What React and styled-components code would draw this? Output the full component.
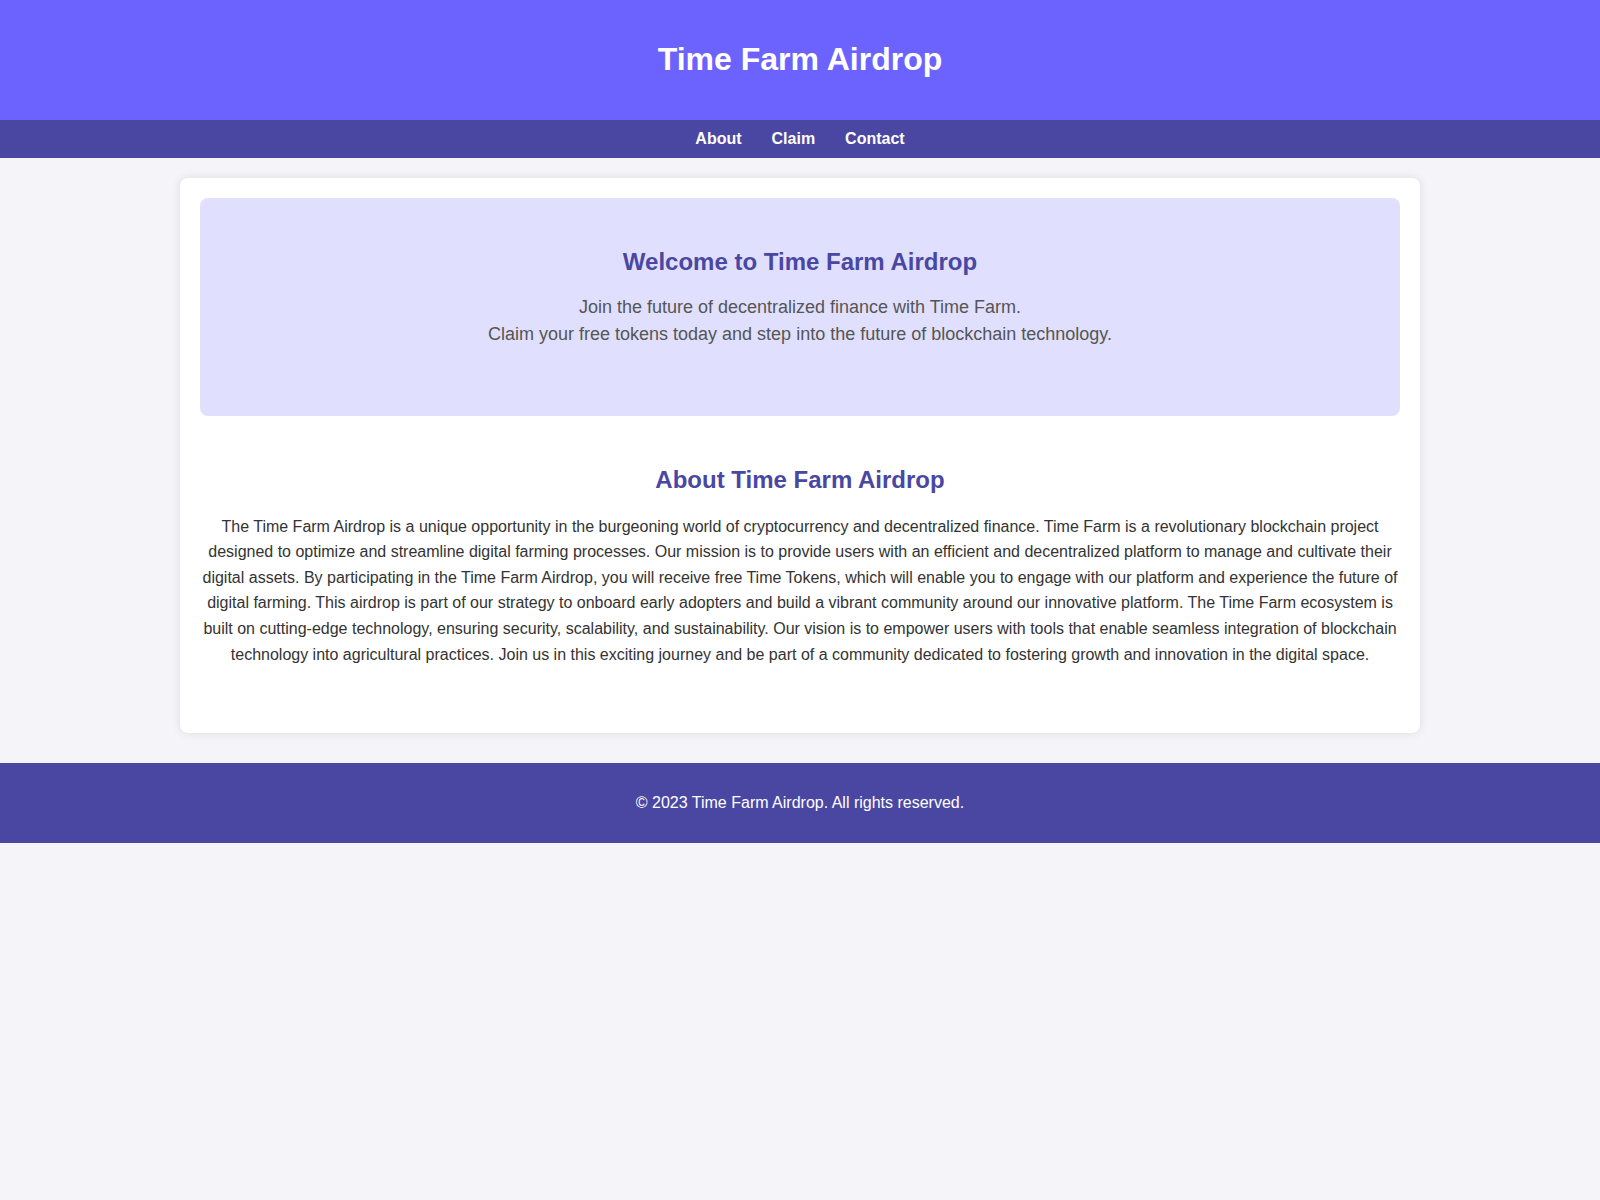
import React from "react";
import styled, { createGlobalStyle } from "styled-components";

const Global = createGlobalStyle`
  html, body { margin: 0; padding: 0; }
  body {
    background: #f4f4f9;
    font-family: "Liberation Sans", Arial, sans-serif;
    color: #333;
  }
`;

const Header = styled.header`
  background: #6c63ff;
  color: #fff;
  padding: 20px 0;
  text-align: center;
`;

const Title = styled.h1`
  margin: 21.44px 0;
  font-size: 32px;
  font-weight: bold;
  line-height: normal;
`;

const Nav = styled.nav`
  background: #4a47a3;
  padding: 10px 0;
  display: flex;
  justify-content: center;
`;

const NavLink = styled.a`
  color: #fff;
  text-decoration: none;
  font-weight: bold;
  font-size: 16px;
  margin: 0 15px;
  line-height: normal;
`;

const Container = styled.main`
  max-width: 1200px;
  margin: 20px auto 30px;
  padding: 20px;
  background: #fff;
  border-radius: 8px;
  box-shadow: 0 0 10px rgba(0, 0, 0, 0.1);
`;

const Hero = styled.section`
  background: #e0e0fe;
  border-radius: 8px;
  padding: 50px 20px;
  text-align: center;
`;

const SectionTitle = styled.h2`
  color: #4a47a3;
  font-size: 24px;
  font-weight: bold;
  line-height: normal;
  margin: ${(p) => (p.$flush ? "0" : "19.92px 0")};
`;

const HeroText = styled.p`
  color: #555;
  font-size: 18px;
  line-height: 1.5;
  margin: 18px 0;
`;

const About = styled.section`
  padding: 30px 0;
  text-align: center;
`;

const Body = styled.p`
  font-size: 16px;
  line-height: 1.6;
  color: #333;
  margin: 16px 0;
`;

const Footer = styled.footer`
  background: #4a47a3;
  color: #fff;
  text-align: center;
  padding: 30px 0;
  font-size: 16px;
  line-height: 20px;
`;

export default function App() {
  return (
    <>
      <Global />
      <Header>
        <Title>Time Farm Airdrop</Title>
      </Header>
      <Nav>
        <NavLink href="#about">About</NavLink>
        <NavLink href="#claim">Claim</NavLink>
        <NavLink href="#contact">Contact</NavLink>
      </Nav>
      <Container>
        <Hero>
          <SectionTitle $flush>Welcome to Time Farm Airdrop</SectionTitle>
          <HeroText>
            Join the future of decentralized finance with Time Farm.
            <br />
            Claim your free tokens today and step into the future of blockchain technology.
          </HeroText>
        </Hero>
        <About id="about">
          <SectionTitle>About Time Farm Airdrop</SectionTitle>
          <Body>
            The Time Farm Airdrop is a unique opportunity in the burgeoning world of cryptocurrency and
            decentralized finance. Time Farm is a revolutionary blockchain project designed to optimize and
            streamline digital farming processes. Our mission is to provide users with an efficient and
            decentralized platform to manage and cultivate their digital assets. By participating in the Time
            Farm Airdrop, you will receive free Time Tokens, which will enable you to engage with our platform
            and experience the future of digital farming. This airdrop is part of our strategy to onboard early
            adopters and build a vibrant community around our innovative platform. The Time Farm ecosystem is
            built on cutting-edge technology, ensuring security, scalability, and sustainability. Our vision is
            to empower users with tools that enable seamless integration of blockchain technology into
            agricultural practices. Join us in this exciting journey and be part of a community dedicated to
            fostering growth and innovation in the digital space.
          </Body>
        </About>
      </Container>
      <Footer>© 2023 Time Farm Airdrop. All rights reserved.</Footer>
    </>
  );
}
